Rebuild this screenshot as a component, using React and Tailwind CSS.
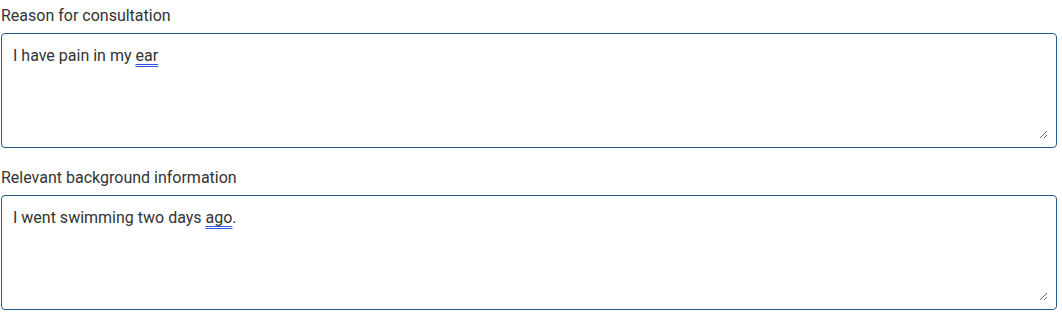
import React from "react";

function Field({ label, children }) {
  return (
    <div className="mb-5">
      <p className="mb-[7px] h-5 text-[16px] leading-5 text-[#333333]">{label}</p>
      <div className="h-[115px] w-[1056px] rounded-[4px] border border-[#285a8c] bg-white p-2">
        <div className="h-full w-full resize overflow-auto pl-[3px] pt-[2px] text-[16px] leading-6 text-[#333333]">
          {children}
        </div>
      </div>
    </div>
  );
}

function Flag({ children }) {
  return (
    <span className="underline decoration-[#2f55e0] decoration-double decoration-1 underline-offset-[3px]">
      {children}
    </span>
  );
}

export default function App() {
  return (
    <div className="bg-white pl-px pt-[6px] font-['Roboto',sans-serif]">
      <Field label="Reason for consultation">
        I have pain in my <Flag>ear</Flag>
      </Field>
      <Field label="Relevant background information">
        I went swimming two days <Flag>ago</Flag>.
      </Field>
    </div>
  );
}
